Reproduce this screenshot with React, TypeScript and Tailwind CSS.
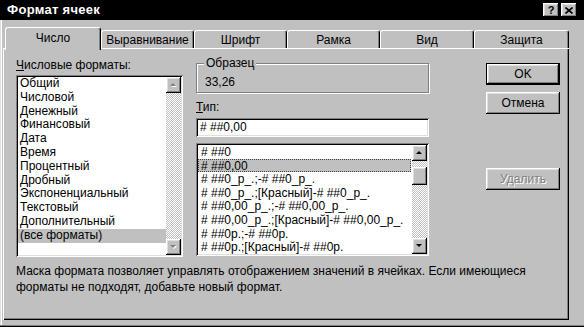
import React from 'react';

const raised = 'shadow-[inset_-1px_-1px_#000,inset_1px_1px_#fff,inset_-2px_-2px_#808080,inset_2px_2px_#dfdfdf]';
const sunken = 'shadow-[inset_1px_1px_#808080,inset_-1px_-1px_#fff,inset_2px_2px_#000,inset_-2px_-2px_#dfdfdf]';
const dither = 'bg-[image:repeating-conic-gradient(#ffffff_0_25%,#c0c0c0_0_50%)] bg-[length:2px_2px]';

const FORMATS = [
  'Общий', 'Числовой', 'Денежный', 'Финансовый', 'Дата', 'Время', 'Процентный',
  'Дробный', 'Экспоненциальный', 'Текстовый', 'Дополнительный', '(все форматы)',
];

const CODES = [
  '# ##0',
  '# ##0,00',
  '# ##0_р_.;-# ##0_р_.',
  '# ##0_р_.;[Красный]-# ##0_р_.',
  '# ##0,00_р_.;-# ##0,00_р_.',
  '# ##0,00_р_.;[Красный]-# ##0,00_р_.',
  '# ##0р.;-# ##0р.',
  '# ##0р.;[Красный]-# ##0р.',
];

const TABS = [
  { label: 'Число', w: 'w-[96px]', active: true },
  { label: 'Выравнивание', w: 'w-[93px]' },
  { label: 'Шрифт', w: 'w-[93px]' },
  { label: 'Рамка', w: 'w-[93px]' },
  { label: 'Вид', w: 'w-[94px]' },
  { label: 'Защита', w: 'w-[95px]' },
];

function Arrow({ up, disabled }: { up?: boolean; disabled?: boolean }) {
  const pts = up ? '1,4 4,1 7,4' : '1,1 4,4 7,1';
  return (
    <div className={`h-[16px] shrink-0 bg-[#c0c0c0] flex items-center justify-center ${raised}`}>
      <svg width="9" height="6" viewBox="0 0 9 6">
        {disabled ? (
          <>
            <polygon points={pts} fill="#ffffff" transform="translate(1,1)" />
            <polygon points={pts} fill="#808080" />
          </>
        ) : (
          <polygon points={pts} fill="#000000" />
        )}
      </svg>
    </div>
  );
}

function ScrollBar({ disabled, thumb }: { disabled?: boolean; thumb?: boolean }) {
  return (
    <div className="w-[15px] flex flex-col shrink-0">
      <Arrow up disabled={disabled} />
      <div className={`flex-1 flex flex-col ${dither}`}>
        {thumb && <div className={`mt-[6px] h-[18px] bg-[#c0c0c0] ${raised}`} />}
      </div>
      <Arrow disabled={disabled} />
    </div>
  );
}

function Button({ label, isDefault, disabled, className }: { label: string; isDefault?: boolean; disabled?: boolean; className: string }) {
  return (
    <div className={`w-[74px] h-[22px] ${isDefault ? 'border border-black' : ''} ${className}`}>
      <div className={`h-full bg-[#c0c0c0] flex items-center justify-center ${raised}`}>
        <span className={disabled ? 'text-[#808080] [text-shadow:1px_1px_0_#fff]' : 'text-black'}>{label}</span>
      </div>
    </div>
  );
}

export default function App() {
  return (
    <div
      className="w-[584px] h-[327px] overflow-hidden bg-[#c0c0c0] flex flex-col text-[12px] text-black shadow-[inset_0_-1px_#000,inset_0_-2px_#808080,inset_1px_0_#dfdfdf,inset_2px_0_#fff]"
      style={{ fontFamily: '"Liberation Sans", Arial, sans-serif' }}
    >
      {/* ── Title bar ─────────────────────────────────────────── */}
      <div className="h-[20px] shrink-0 bg-black flex items-center pl-[7px] pr-[7px]">
        <span className="text-white font-bold text-[13px] tracking-[0.3px]">Формат ячеек</span>
        <div className="ml-auto flex gap-[2px]">
          <div className={`w-[16px] h-[14px] bg-[#c0c0c0] flex items-center justify-center font-bold text-[11px] leading-none ${raised}`}>?</div>
          <div className={`w-[16px] h-[14px] bg-[#c0c0c0] flex items-center justify-center ${raised}`}>
            <svg width="8" height="7" viewBox="0 0 8 7">
              <path d="M0.5 0.5 L7.5 6.5 M7.5 0.5 L0.5 6.5" stroke="#000" strokeWidth="1.6" />
            </svg>
          </div>
        </div>
      </div>

      {/* ── Tabs ──────────────────────────────────────────────── */}
      <div className="h-[28px] shrink-0 flex items-end pl-[5px]">
        {TABS.map((t) => (
          <div
            key={t.label}
            className={`${t.w} ${t.active ? 'h-[23px] -mb-[2px] relative z-10 pb-[3px]' : 'h-[18px]'} bg-[#c0c0c0] border-t border-l border-white border-r border-r-black rounded-t-[3px] shadow-[inset_-1px_0_#808080] flex items-center justify-center`}
          >
            {t.label}
          </div>
        ))}
      </div>

      {/* ── Panel ─────────────────────────────────────────────── */}
      <div className="w-[566px] h-[272px] ml-[3px] flex flex-col pt-[8px] pl-[13px] shadow-[inset_1px_1px_#fff,inset_-1px_-1px_#000,inset_-2px_-2px_#808080]">
        <div className="flex">
          {/* Left column */}
          <div className="w-[167px] flex flex-col">
            <div className="mt-[2px] h-[14px] leading-[14px]"><u>Ч</u>исловые форматы:</div>
            <div className={`mt-[3px] h-[182px] bg-white p-[2px] flex ${sunken}`}>
              <div className="flex-1 flex flex-col">
                {FORMATS.map((f, i) => (
                  <div key={f} className={`h-[13.8px] leading-[13.8px] pl-[2px] whitespace-nowrap ${i === FORMATS.length - 1 ? 'bg-[#c0c0c0]' : ''}`}>{f}</div>
                ))}
              </div>
              <ScrollBar disabled />
            </div>
          </div>

          {/* Middle column */}
          <div className="w-[233px] ml-[13px] flex flex-col">
            <div className="mt-[7px] h-[30px] relative border border-[#808080] shadow-[inset_1px_1px_#fff,1px_1px_#fff] pl-[8px] pt-[11px] leading-[14px]">
              <span className="absolute -top-[8px] left-[7px] px-[2px] bg-[#c0c0c0] leading-[14px]">Образец</span>
              33,26
            </div>
            <div className="mt-[7px] h-[14px] leading-[14px]"><u>Т</u>ип:</div>
            <div className={`mt-[4px] h-[19px] bg-white pl-[4px] leading-[19px] ${sunken}`}>
              # ##0,00
            </div>
            <div className={`mt-[6px] h-[113px] bg-white p-[2px] flex ${sunken}`}>
              <div className="flex-1 flex flex-col pr-[1px]">
                {CODES.map((c, i) => (
                  <div
                    key={c}
                    className={`h-[13.6px] leading-[12px] pl-[2px] whitespace-nowrap border border-dotted ${i === 1 ? 'bg-[#c0c0c0] border-[#404040]' : 'border-transparent'}`}
                  >
                    {c}
                  </div>
                ))}
              </div>
              <ScrollBar thumb />
            </div>
          </div>

          {/* Right column */}
          <div className="ml-[57px] flex flex-col">
            <Button label="OK" isDefault className="mt-[7px]" />
            <Button label="Отмена" className="mt-[7px]" />
            <Button label="Удалить" disabled className="mt-[54px]" />
          </div>
        </div>

        <p className="mt-[6px] leading-[16px] w-[520px]">
          Маска формата позволяет управлять отображением значений в ячейках. Если имеющиеся форматы не подходят, добавьте новый формат.
        </p>
      </div>
    </div>
  );
}
